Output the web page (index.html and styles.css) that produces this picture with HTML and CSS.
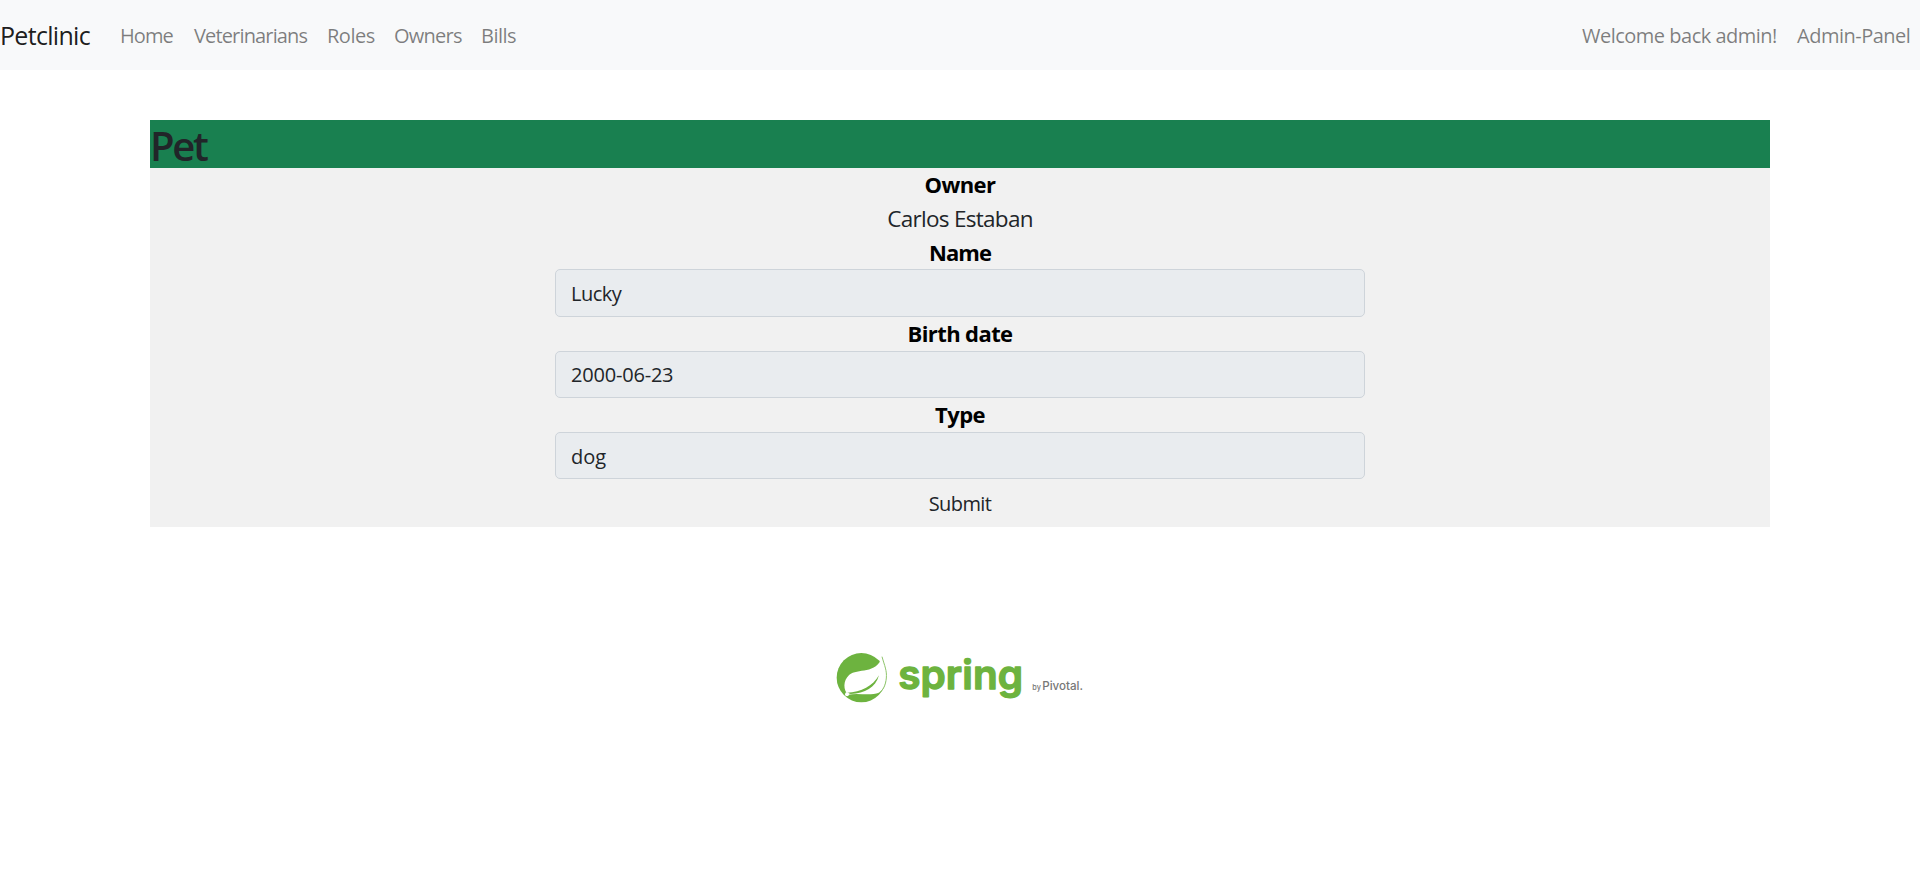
FILE: index.html
```html
<!DOCTYPE html>
<html lang="en">
<head>
<meta charset="utf-8">
<title>Petclinic</title>
<link rel="stylesheet" href="styles.css">
</head>
<body>
<nav class="navbar">
  <a class="brand">Petclinic</a>
  <ul class="nav-list nav-main">
    <li class="nav-home">Home</li><li class="nav-vets">Veterinarians</li><li class="nav-roles">Roles</li><li class="nav-owners">Owners</li><li class="nav-bills">Bills</li>
  </ul>
  <ul class="nav-list">
    <li class="nav-welcome">Welcome back admin!</li><li class="nav-admin">Admin-Panel</li>
  </ul>
</nav>
<main class="container">
  <h2 class="title">Pet</h2>
  <form class="panel">
    <b class="label">Owner</b>
    <span class="owner">Carlos Estaban</span>
    <b class="label label-name">Name</b>
    <div class="field">Lucky</div>
    <b class="label label-birth">Birth date</b>
    <div class="field field-date">2000-06-23</div>
    <b class="label">Type</b>
    <div class="field field-type">dog</div>
    <div class="submit">Submit</div>
  </form>
</main>
<footer class="footer">
  <svg class="logo" viewBox="0 0 840 225" role="img" aria-label="Spring by Pivotal">
    <circle cx="124" cy="113" r="74" fill="#6db33f"/>
    <path d="M186 50C193 76 200 90 199 114C197 134 190 150 177 158C150 168 116 158 84 164C70 150 68 122 88 104C112 84 170 104 186 50Z" fill="#fff"/>
    <path d="M186 50C194 78 201 92 199 114C197 136 189 152 176 159" fill="none" stroke="#8fc56c" stroke-width="3"/>
    <path d="M80 158C125 157 158 138 177 106C166 144 135 160 92 162Z" fill="#6db33f"/>
    <circle cx="81" cy="163" r="6" fill="#fff"/>
    <text class="logo-name" x="235" y="148" textLength="374" lengthAdjust="spacingAndGlyphs">spring</text>
    <text class="logo-pivotal" x="637" y="151" textLength="152" lengthAdjust="spacingAndGlyphs"><tspan class="logo-by">by</tspan><tspan dx="4">Pivotal.</tspan></text>
  </svg>
</footer>
</body>
</html>
```
FILE: styles.css
```css
* { box-sizing: border-box; }
body { margin: 0; background: #fff; color: #212529; font-family: "Open Sans", "Noto Sans", sans-serif; font-size: 20px; line-height: 30px; }
.navbar { height: 70px; padding-top: 2px; background: #f8f9fa; display: flex; align-items: center; white-space: nowrap; }
.brand { width: 110px; padding-bottom: 2px; font-size: 25px; letter-spacing: -.7px; color: rgba(0,0,0,.9); }
.nav-list { display: flex; margin: 0; padding: 0; list-style: none; color: rgba(0,0,0,.5); letter-spacing: -.5px; }
.nav-main { flex: 1; }
.nav-list li { padding-left: 10px; }
.nav-list .nav-home { width: 74px; letter-spacing: -.9px; }
.nav-list .nav-vets { width: 133px; letter-spacing: -.85px; }
.nav-roles { width: 67px; }
.nav-list .nav-owners { width: 87px; letter-spacing: -.75px; }
.nav-bills { width: 54px; }
.nav-welcome { width: 215px; }
.nav-admin { width: 133px; }
.container { width: 1620px; margin: 50px auto 0; }
.title { margin: 0; height: 48px; background: #198050; font-size: 40px; line-height: 51px; font-weight: 600; letter-spacing: -2.3px; }
.panel { display: flex; flex-direction: column; align-items: center; background: #f1f1f1; font-size: 22.5px; line-height: 33.75px; }
.label { height: 33.75px; line-height: 33px; color: #000; font-size: 22px; font-weight: 700; letter-spacing: -.6px; }
.label-name { letter-spacing: -1px; }
.owner { letter-spacing: -.7px; }
.field { width: 50%; height: 47.5px; padding: 9px 15px; border: 1px solid #ced4da; border-radius: 5px; background: #e9ecef; color: #212529; font-size: 20px; line-height: 30px; letter-spacing: -.5px; }
.field-date { padding-top: 8px; letter-spacing: -.2px; }
.field-type { letter-spacing: 0; }
.submit { height: 47.5px; font-size: 20px; line-height: 49px; letter-spacing: -.6px; }
.footer { display: flex; justify-content: center; padding-top: 113px; }
.logo { display: block; width: 280px; height: 75px; }
.logo-name { font: 600 119px Inter, sans-serif; fill: #6db33f; stroke: #6db33f; stroke-width: 4; stroke-linejoin: round; }
.logo-pivotal { font: 500 35px Inter, sans-serif; fill: #777; }
.logo-by { font-size: 22px; }
```
